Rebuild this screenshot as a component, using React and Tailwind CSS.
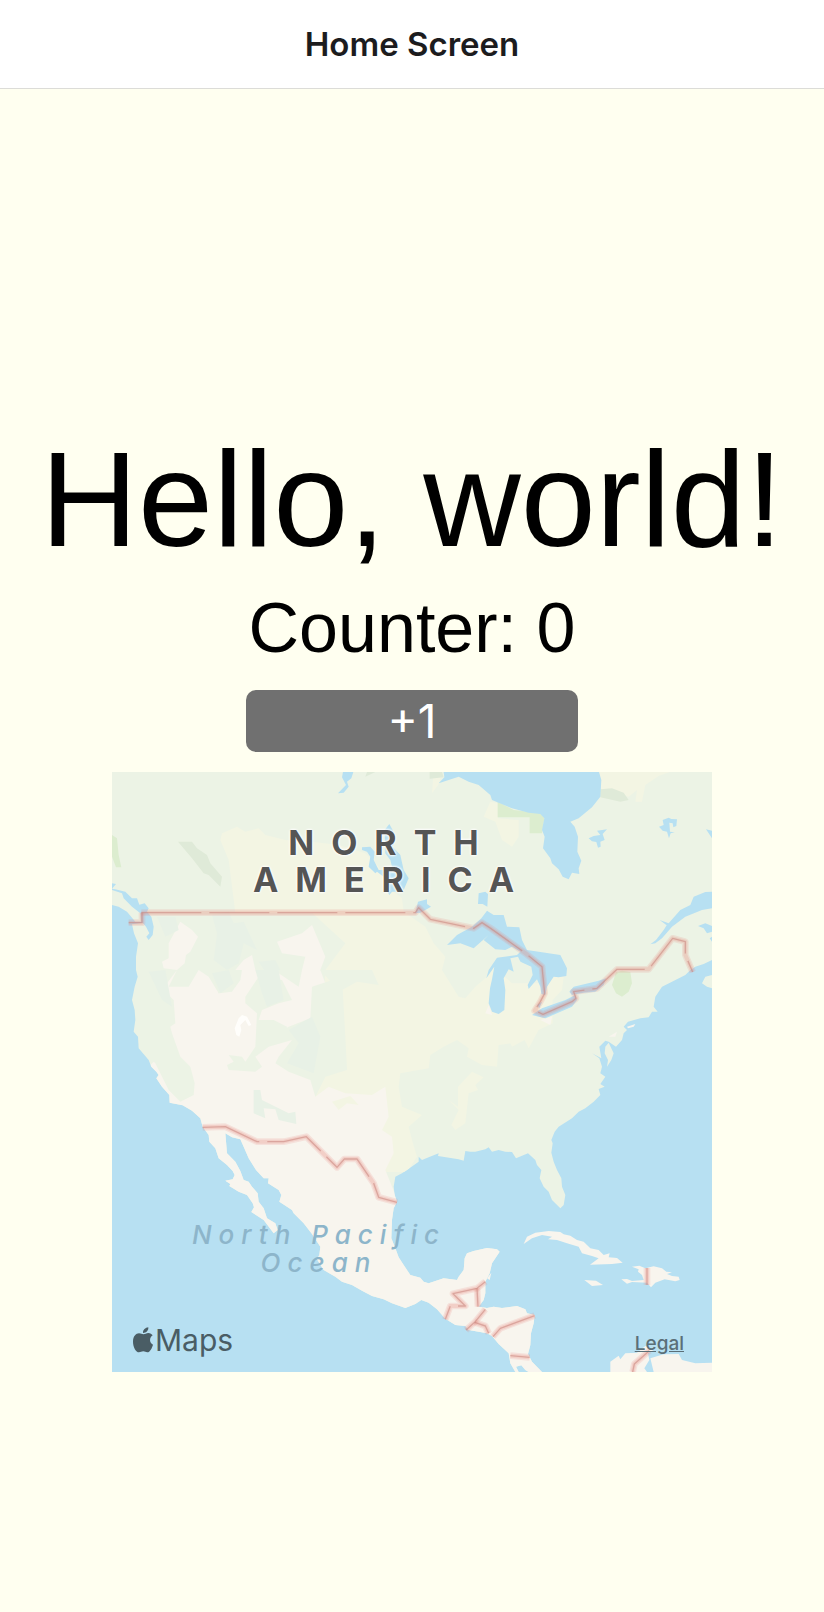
import { useState } from "react";

const MAINLAND =
  "M0 0V340L12 342 0 356 10 358 40 365 60 385 75 385 82 404 98 400 110 415 105 425 118 440 125 470 122 495 110 510 103 500 112 490 102 470 92 458 60 463 66 490 78 520 72 560 72 600 77 620 68 650 60 690 68 720 70 750 65 785 78 800 80 835 110 870 118 890 133 905 140 915 133 925 150 950 172 975 173 998 212 1006 240 1022 265 1045 272 1070 290 1095 292 1115 310 1135 320 1165 345 1185 362 1203 368 1215 362 1228 340 1232 355 1242 352 1248 380 1265 405 1275 422 1300 426 1312 418 1326 455 1350 485 1390 497 1380 490 1360 465 1345 455 1315 440 1295 437 1270 420 1250 410 1235 395 1230 385 1203 370 1175 345 1150 340 1090 360 1102 385 1108 395 1130 410 1165 432 1200 455 1225 470 1225 468 1240 500 1260 508 1275 502 1295 540 1320 545 1330 575 1360 600 1392 625 1430 622 1455 615 1468 635 1500 670 1520 690 1535 720 1545 750 1562 780 1578 815 1588 840 1600 880 1614 910 1602 928 1590 950 1598 975 1618 1000 1646 1030 1665 1060 1668 1070 1680 1100 1685 1125 1690 1140 1698 1160 1722 1190 1750 1195 1780 1210 1806H1220L1212 1790 1228 1786 1240 1800 1250 1806H1290L1260 1775 1248 1752 1255 1725 1257 1690 1265 1660 1268 1635 1245 1630 1240 1618 1215 1608 1170 1614 1145 1610 1125 1614 1100 1610 1115 1590 1120 1570 1120 1535 1133 1510 1140 1480 1163 1445 1155 1438 1125 1434 1085 1443 1065 1450 1058 1465 1055 1500 1040 1520 1035 1530 995 1525 950 1540 935 1535 925 1523 895 1515 875 1485 860 1462 850 1435 838 1405 840 1350 845 1315 855 1295 848 1275 845 1250 850 1220 870 1210 885 1200 920 1175 920 1160 930 1170 950 1162 980 1150 978 1158 1040 1168 1055 1172 1060 1143 1075 1145 1090 1145 1120 1138 1130 1132 1140 1145 1160 1140 1180 1145 1200 1146 1212 1165 1248 1150 1270 1170 1275 1185 1288 1200 1283 1225 1295 1250 1310 1265 1320 1290 1345 1315 1355 1305 1360 1275 1350 1250 1348 1225 1335 1200 1325 1175 1318 1148 1322 1120 1318 1110 1328 1085 1340 1070 1380 1045 1400 1025 1420 1015 1445 995 1465 975 1460 957 1478 950 1465 942 1480 920 1465 910 1470 890 1462 865 1440 850 1468 865 1462 830 1480 812 1490 815 1512 830 1530 810 1535 790 1545 780 1535 770 1548 755 1585 745 1610 742 1620 725 1637 725 1625 710 1630 680 1650 650 1680 635 1720 615 1735 600 1750 590 1775 582 1800 570V0Z";

const RED_LINES = [
  "M88 428H910L920 413 955 448 1085 475 1110 458 1136 475 1238 548 1290 590 1298 670 1285 695 1268 722 1293 733 1380 695 1392 685 1385 665 1455 655 1515 598H1610L1682 505 1720 515V555L1742 606",
  "M50 458H90V428",
  "M272 1072 340 1070 435 1115H515L583 1100 675 1192 697 1167H735L785 1240 800 1282 855 1297",
  "M1120 1535 1095 1555 1023 1571 1060 1608H1015L1000 1648",
  "M1095 1555 1098 1610",
  "M1120 1618 1088 1657 1062 1680",
  "M1088 1657 1120 1668 1130 1690",
  "M1268 1637 1165 1675 1143 1700",
  "M1195 1757 1253 1762",
  "M1605 1494V1545",
  "M1612 1742 1567 1782 1562 1806",
];

const UI_FACE = "font-['Inter','Liberation_Sans',sans-serif]";
const DISPLAY_FACE = "font-['Liberation_Sans',Arial,sans-serif]";

function ContinentMap() {
  return (
    <svg viewBox="0 6 1800 1800" className="block h-auto w-full" aria-hidden="true">
      <defs>
        <clipPath id="land">
          <path d={MAINLAND} />
        </clipPath>
      </defs>
      <rect width="1800" height="1806" fill="#b7e0f2" />
      <path d={MAINLAND} fill="#ecf3e5" />

      <g clipPath="url(#land)">
        {/* prairies and plains */}
        <path
          fill="#f3f5e3"
          d="M330 190 375 170 400 185 440 175 460 195 520 210 600 215 680 225 760 250 800 290 840 360 870 385 875 425 940 470 965 520 1000 560 990 600 1040 680 1060 685 1090 650 1125 620 1145 590 1200 640 1290 640 1320 610 1355 620 1350 660 1322 690 1322 760 1280 780 1250 835 1238 810 1200 830 1195 820 1160 825 1155 890 1110 885 1065 860 1070 835 1035 810 995 830 955 855 950 895 865 910 860 950 870 1010 930 1035 890 1070 900 1110 915 1160 885 1206H820L600 990 620 900 700 870 690 830 630 780 640 600 700 520 600 428H370L350 270 325 210Z"
        />
        {/* deserts, mountains and the south */}
        <path
          fill="#f8f5ee"
          d="M205 455 240 480 258 500 235 545 222 555 218 580 195 600 165 640 160 665 185 690 190 760 175 770 180 790 205 860 235 890 248 940 245 975 205 995 170 960 130 880 125 875 100 900 0 1100 0 1806H1806V1250H1560L1200 1400H900L820 1200 845 1150 840 1100 810 1080 830 1040 820 950 780 975 700 970 650 950 610 980 600 880 590 780 650 735 640 640 625 600 640 560 600 465 570 490 495 515 510 550 580 560 570 600 560 650 500 610 470 630 430 600 420 555 395 570 370 600 385 630 360 665 320 670 290 620 260 600 230 650 170 650 195 600 155 595 150 575 170 565 170 520Z"
        />
        <path
          fill="#ecf3e5"
          d="M400 680 440 620 510 630 540 690 500 700 450 720 440 750 485 750 525 770 520 790 480 800 530 770 595 745 600 650 690 620 700 800 705 900 640 920 610 980 595 930 530 905 490 880 500 860 540 810 470 830 430 860 450 890 430 905 350 900 345 885 365 875 350 855 390 860 400 875 430 830 435 730 400 700ZM300 600H390L385 630 360 660 320 670ZM625 600H780L800 645 735 635 690 660 660 640Z"
        />
        <path
          fill="#e8f1e6"
          d="M300 435 350 425 365 460 395 455 435 540 395 520 380 580 345 600 305 570 315 490ZM135 440 190 440 200 480 160 500ZM110 605 160 600 180 710 150 690ZM430 600H500L515 690 465 710 450 670ZM300 610 350 600 365 640 325 670ZM530 780 600 740 625 800 605 910 525 880 560 820ZM425 960 445 960 450 990 530 1030 550 1025 553 1062 500 1050 490 1018 455 1015 460 1045 425 1030ZM440 575 490 570 505 600 460 605Z"
        />
        <path
          fill="#f3f5e3"
          d="M660 995 715 978 740 1005 705 1000 680 1020ZM1080 905 1115 922 1090 945 1098 960 1070 970 1060 1060 1030 1080 1018 1065 1040 1020 1010 990 1038 1010 1038 950ZM965 0H990L982 40 960 70ZM1135 95 1160 100 1158 145 1220 150 1220 200 1200 230 1170 210 1150 155 1115 140ZM1460 0H1690L1640 18 1600 45 1590 95 1570 95 1575 60 1550 80 1468 60Z"
        />
        <path
          fill="#dfead8"
          d="M198 215 240 215 255 235 285 255 295 280 330 320 325 350 290 315 275 310 240 265ZM1465 58 1500 55 1535 68 1550 90 1525 95 1465 82ZM760 20 790 6H765ZM953 6H990L995 22 953 26Z"
        />
        <path
          fill="#dcedcf"
          d="M0 195 15 205 20 255 28 292 12 292 0 260ZM1157 95 1205 120 1290 130 1297 145 1290 190H1253V142H1157ZM1512 607 1530 602 1555 606 1560 640 1550 665 1530 680 1512 670 1500 645Z"
        />
        <path
          fill="#fffefb"
          d="M368 775 380 745 390 735 405 740 418 765 410 768 400 750 385 765 388 780 382 800 373 795Z"
        />
        <path fill="#f8f5ee" d="M1120 730 1130 705 1140 735ZM1490 800 1515 785 1510 800ZM1285 750 1320 740 1315 765Z" />
      </g>

      <g fill="#b7e0f2">
        <path d="M980 40 997 22 995 6H1461L1468 30 1465 80 1440 112 1400 145 1375 155 1388 170 1398 200 1396 245 1408 272 1400 295 1402 312 1380 308 1370 328 1352 320 1340 298 1320 280 1315 265 1293 235 1298 200 1290 180 1297 145 1285 132 1250 128 1200 115 1140 90 1135 75 1100 45 1070 35 1040 20Z" />
        <path d="M693 6H724L718 25 705 35 710 50 695 68 678 70 702 45 690 22Z" />
        <path d="M832 162 842 180 850 210 842 230 865 255 875 300 890 325 875 360 865 345 860 365 840 365 832 375 820 355 815 320 795 305 790 310 770 290 775 260 765 245 750 240 750 232 775 230 788 245 785 270 800 300 820 300 845 310 835 270 820 250 818 180Z" />
        <path d="M918 395 945 388 945 402 957 410 940 420 925 428 910 430ZM1100 370 1120 365 1128 372 1126 410 1112 402 1098 402Z" />
        <path d="M1430 205 1445 198 1465 195 1455 182 1485 178 1472 192 1478 210 1465 215 1466 230 1458 233 1453 216 1440 214Z" />
        <path d="M1641 170 1655 165 1652 150 1670 143 1678 147 1695 148 1693 168 1684 172 1682 160 1672 158 1674 185 1688 187 1676 190 1671 205 1665 185 1652 182Z" />
        <path d="M1782 178 1800 182V205Z" />
        <path d="M1615 523 1632 510 1655 480 1664 466 1643 450 1670 460 1705 420 1735 405 1745 380 1780 366 1800 365V415L1770 420 1720 440 1680 470 1650 505 1630 520Z" />
        <path d="M1758 468 1780 460 1800 468V485L1785 490 1775 475ZM1793 505 1800 500V515Z" />
      </g>

      <g transform="translate(960 360)" fill="#b7e0f2">
        <path d="M45 165 75 135 120 110 148 85 165 62 185 75H215L225 110 262 112 270 150 285 180 340 188 385 195 405 235 403 258 380 262 365 260 345 290 340 315 328 312 325 290 315 268 290 297 287 285 302 255 298 230 265 215 258 200 235 205 245 245 230 238 215 265 220 300 217 360 200 372 180 365 170 340 174 295 180 268 187 230 163 265 170 240 195 203 255 195 265 185 240 170 220 180 190 178 155 150 170 135 125 175 85 160Z" />
        <path d="M412 305 425 290 500 272 522 265 515 285 490 305 455 308 420 315ZM300 375 330 355 400 330 430 315 435 330 420 350 340 385 320 380ZM315 345 330 335 322 355Z" />
      </g>

      <g fill="#f8f5ee">
        <path d="M1235 1422 1245 1400 1270 1388 1310 1383 1345 1386 1355 1393 1375 1397 1395 1410 1415 1415 1435 1435 1460 1440 1475 1455 1493 1450 1490 1462 1515 1464 1532 1478 1500 1482 1434 1484 1460 1465 1440 1458 1410 1450 1400 1430 1365 1420 1335 1410 1308 1408 1320 1400 1290 1395 1260 1405Z" />
        <path d="M1417 1530 1452 1532 1473 1545 1440 1548Z" />
        <path d="M1528 1528 1545 1527 1560 1533 1595 1530 1590 1515 1578 1505 1580 1498 1560 1490 1582 1487 1600 1495 1625 1489 1650 1495 1663 1505 1680 1507 1665 1512 1680 1518 1700 1520 1703 1530 1690 1534 1658 1528 1630 1538 1617 1552 1605 1538 1560 1536 1545 1541Z" />
        <path d="M1495 1806V1775L1520 1757 1525 1768 1540 1750 1575 1748 1600 1728 1625 1740 1608 1750 1612 1770 1597 1795 1605 1806ZM1625 1806 1615 1765 1655 1753 1700 1752 1710 1770 1750 1780 1800 1778V1806ZM1125 1525 1138 1508 1133 1530Z" />
        <path d="M1545 770 1570 762 1565 770 1548 775Z" />
      </g>
      <g fill="#ecf3e5">
        <path d="M0 360 30 370 35 385 60 410 85 430 88 455 70 455 45 425 20 410 0 405ZM1480 830 1490 818 1505 850 1498 870 1485 890 1488 870 1478 850ZM1770 640 1780 620 1800 615V655L1785 650ZM1205 590 1220 570 1240 590 1225 610Z" />
      </g>

      <g fill="none" strokeLinejoin="round">
        {RED_LINES.map((d) => (
          <path key={d} d={d} stroke="#e8857a" strokeOpacity="0.17" strokeWidth="20" />
        ))}
        {RED_LINES.map((d) => (
          <path key={d} d={d} stroke="#e8857a" strokeOpacity="0.2" strokeWidth="12" />
        ))}
        {RED_LINES.map((d) => (
          <path key={d} d={d} stroke="#c9847c" strokeOpacity="0.55" strokeWidth="4" strokeDasharray="180 24" />
        ))}
      </g>
    </svg>
  );
}

function AppleMark() {
  return (
    <svg viewBox="0 0 60 76" className="h-[26px] w-5" fill="#4a5d65" aria-hidden="true">
      <path d="M46 0C47 9 40 17 30 17 29 8 37 1 46 0Z" />
      <path d="M31 21C36 21 40 17 46 17 52 17 56 20 59 24 48 31 49 47 60 52 57 62 51 75 43 75 38 75 36 72 31 72 25 72 23 75 18 75 9 75 0 60 0 43 0 27 9 18 18 18 24 18 27 21 31 21Z" />
    </svg>
  );
}

export default function App() {
  const [count, setCount] = useState(0);
  return (
    <div className={`flex min-h-screen flex-col bg-[#fffff0] text-black ${UI_FACE}`}>
      <header className="flex h-[89px] items-center justify-center border-b border-[#dcdcd8] bg-white pt-px">
        <h1 className="text-[33px] font-semibold text-[#1c1c1e]">Home Screen</h1>
      </header>
      <main className="flex grow flex-col items-center justify-center pt-[84px]">
        <p className={`text-[135px] leading-[172px] whitespace-nowrap ${DISPLAY_FACE}`}>Hello, world!</p>
        <p className={`text-[70px] leading-[84px] ${DISPLAY_FACE}`}>Counter: {count}</p>
        <button
          type="button"
          onClick={() => setCount(count + 1)}
          className="mt-5 h-[62px] w-[332px] rounded-[10px] bg-[#707070] text-[46px] leading-none text-white"
        >
          +1
        </button>
        <section aria-label="Map" className="relative mt-5 w-full max-w-[600px]">
          <ContinentMap />
          <p className="absolute top-[52px] left-[135px] w-[290px] text-center text-[34px] leading-[37px] font-bold tracking-[17px] text-[#555] [text-shadow:0_0_3px_white,0_0_3px_white,0_0_2px_white]">
            NORTH AMERICA
          </p>
          <p className="absolute top-[449px] left-[62px] w-[290px] text-center text-[26px] leading-7 font-medium tracking-[7px] text-[#8db5ca] italic">
            North Pacific Ocean
          </p>
          <div className="absolute bottom-3 left-[21px] flex items-center gap-0.5 text-[30px] leading-10 text-[#4a5d65]">
            <AppleMark />
            <span>Maps</span>
          </div>
          <a href="#legal" className="absolute right-7 bottom-4 text-[19px] leading-6 font-medium text-[#5b6f78] underline">
            Legal
          </a>
        </section>
      </main>
    </div>
  );
}
